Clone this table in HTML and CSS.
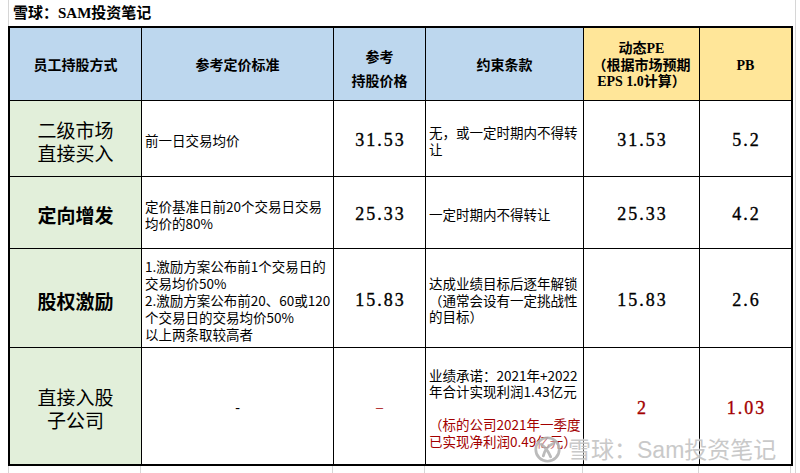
FILE: index.html
```html
<!DOCTYPE html>
<html lang="zh">
<head>
<meta charset="utf-8">
<title>雪球：SAM投资笔记</title>
<link rel="stylesheet" href="styles.css">
</head>
<body>
<div class="sheet">
  <div class="title-row"><span class="title">雪球：SAM投资笔记</span></div>
  <div class="grid">
    <div class="cell hd blue"><div class="txt">员工持股方式</div></div>
    <div class="cell hd blue"><div class="txt">参考定价标准</div></div>
    <div class="cell hd blue tall"><div class="txt">参考<br>持股价格</div></div>
    <div class="cell hd blue"><div class="txt">约束条款</div></div>
    <div class="cell hd yellow"><div class="txt">动态PE<br>（根据市场预期<br>EPS 1.0计算）</div></div>
    <div class="cell hd yellow"><div class="txt">PB</div></div>

    <div class="cell first"><div class="txt">二级市场<br>直接买入</div></div>
    <div class="cell desc"><div class="txt">前一日交易均价</div></div>
    <div class="cell num"><div class="txt">31.53</div></div>
    <div class="cell desc"><div class="txt">无，或一定时期内不得转<br>让</div></div>
    <div class="cell num"><div class="txt">31.53</div></div>
    <div class="cell num"><div class="txt">5.2</div></div>

    <div class="cell first bold"><div class="txt">定向增发</div></div>
    <div class="cell desc"><div class="txt">定价基准日前20个交易日交易<br>均价的80%</div></div>
    <div class="cell num"><div class="txt">25.33</div></div>
    <div class="cell desc"><div class="txt">一定时期内不得转让</div></div>
    <div class="cell num"><div class="txt">25.33</div></div>
    <div class="cell num"><div class="txt">4.2</div></div>

    <div class="cell first bold"><div class="txt">股权激励</div></div>
    <div class="cell desc loose"><div class="txt">1.激励方案公布前1个交易日的<br>交易均价50%<br>2.激励方案公布前20、60或120<br>个交易日的交易均价50%<br>以上两条取较高者</div></div>
    <div class="cell num"><div class="txt">15.83</div></div>
    <div class="cell desc"><div class="txt">达成业绩目标后逐年解锁<br>（通常会设有一定挑战性<br>的目标）</div></div>
    <div class="cell num"><div class="txt">15.83</div></div>
    <div class="cell num"><div class="txt">2.6</div></div>

    <div class="cell first"><div class="txt">直接入股<br>子公司</div></div>
    <div class="cell dash"><div class="txt">-</div></div>
    <div class="cell dash red"><div class="txt">–</div></div>
    <div class="cell desc"><div class="txt">业绩承诺：2021年+2022<br>年合计实现利润1.43亿元<br>&nbsp;<br><span class="red">（标的公司2021年一季度<br>已实现净利润0.49亿元）</span></div></div>
    <div class="cell num red"><div class="txt">2</div></div>
    <div class="cell num red"><div class="txt">1.03</div></div>
  </div>
  <div class="tail">
    <div class="tcell"></div><div class="tcell"></div><div class="tcell"></div>
    <div class="tcell"></div><div class="tcell"></div><div class="tcell"></div>
  </div>
  <div class="watermark">
    <svg class="logo" width="27" height="27" viewBox="0 0 26 26">
      <circle cx="13" cy="13" r="11.3" fill="rgba(255,255,255,0.5)" stroke="#b4b4b4" stroke-width="2.6"/>
      <path d="M7 8 C11 11 14 15 16 20" fill="none" stroke="#b4b4b4" stroke-width="2.8" stroke-linecap="round"/>
      <path d="M19 7 C14 9 10 14 9 19" fill="none" stroke="#b4b4b4" stroke-width="2.8" stroke-linecap="round"/>
    </svg>
    <span class="wm-text">雪球：Sam投资笔记</span>
  </div>
</div>
</body>
</html>
```

FILE: styles.css
```css
* { box-sizing: border-box; }

html, body {
  margin: 0;
  padding: 0;
  background: #ffffff;
}

body {
  font-family: "Noto Sans CJK SC", sans-serif;
  color: #000;
}

.sheet {
  position: relative;
  width: 796px;
  height: 473px;
  border-right: 1px solid #d6d6d6;
  overflow: hidden;
}

.title-row {
  height: 26px;
  margin-left: 8px;
  padding-left: 4px;
  border-left: 1px solid #d6d6d6;
  display: flex;
  align-items: center;
}

.title {
  font-family: "Liberation Serif", "Noto Sans CJK SC", serif;
  font-weight: 700;
  font-size: 15px;
  line-height: 1;
  padding-top: 1px;
}

.grid {
  margin-left: 8px;
  width: 785px;
  border: 2px solid #000;
  background: #000;
  display: grid;
  grid-template-columns: 131px 191px 91px 157px 115px 91px;
  grid-template-rows: 72px 75px 71px 98px 116px;
  gap: 1px;
}

.cell {
  background: #fff;
  display: flex;
  align-items: center;
  justify-content: center;
  text-align: center;
  padding-top: 4px;
}

.txt {
  display: block;
}

.hd {
  font-family: "Liberation Serif", "Noto Sans CJK SC", serif;
  font-weight: 700;
  font-size: 14px;
  line-height: 16.5px;
}

.hd.tall {
  line-height: 24px;
  padding-top: 12px;
}

.blue { background: #bdd7ee; }
.yellow { background: #ffe699; }

.first {
  background: #e2efda;
  font-size: 19px;
  line-height: 23px;
  font-weight: 400;
}

.first.bold { font-weight: 700; }

.desc {
  justify-content: flex-start;
  text-align: left;
  padding-left: 3px;
  font-size: 13.5px;
  line-height: 16.5px;
}

.desc.loose { line-height: 17px; }

.num {
  font-family: "Liberation Serif", serif;
  font-size: 18px;
  letter-spacing: 2px;
  padding-left: 2px;
  -webkit-text-stroke: 0.35px currentColor;
}

.dash {
  font-family: "Liberation Serif", serif;
  font-size: 14px;
}

.red { color: #a30000; }

.tail {
  margin-left: 8px;
  display: grid;
  grid-template-columns: 133px 192px 92px 158px 116px 92px;
  height: 7px;
}

.tcell {
  border-right: 1px solid #d6d6d6;
}

.tcell:first-child {
  border-left: 1px solid #d6d6d6;
}

.watermark {
  position: absolute;
  left: 534px;
  top: 436px;
  display: flex;
  align-items: center;
  gap: 7px;
  opacity: 0.9;
}

.wm-text {
  font-family: "Liberation Sans", "Noto Sans CJK SC", sans-serif;
  font-size: 23px;
  line-height: 26px;
  color: #c4c4c4;
  text-shadow: 0 0 1px #ffffff, 0 0 2px #ffffff;
}
```
